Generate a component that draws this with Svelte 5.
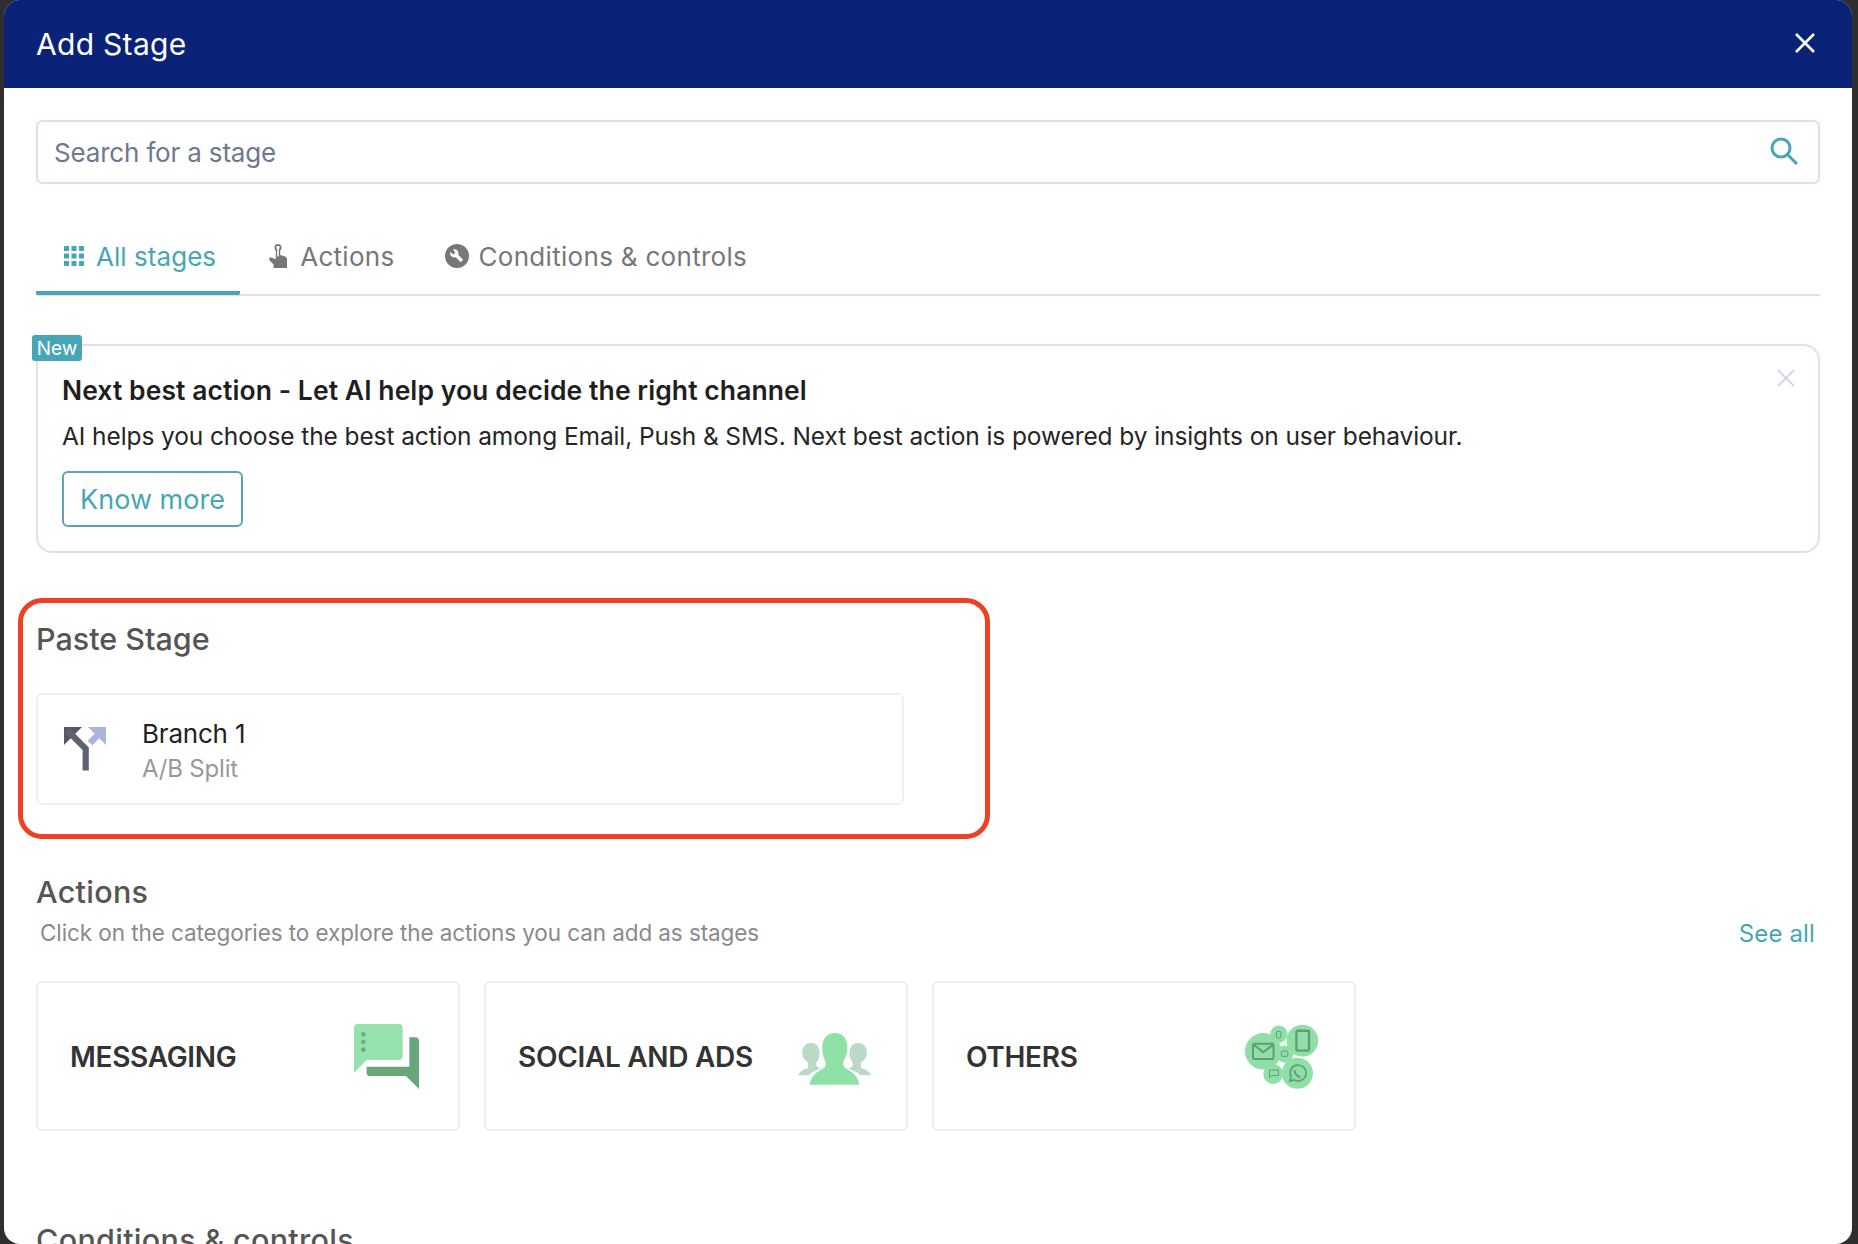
<script>
  const gridDots = [0, 7.5, 15].flatMap((y) => [0, 7.5, 15].map((x) => ({ x, y })));
</script>

<div class="modal">
  <header class="head">
    <h1>Add Stage</h1>
    <svg class="close" viewBox="0 0 20 20" aria-hidden="true"><path d="M1 1 19 19M19 1 1 19" /></svg>
  </header>

  <main class="body">
    <div class="search">
      <span>Search for a stage</span>
      <svg viewBox="0 0 28 28" aria-hidden="true"><circle cx="11" cy="11" r="9" /><path d="M17.5 17.5 27 27" /></svg>
    </div>

    <nav class="tabs">
      <div class="tab active">
        <svg class="ic grid" viewBox="0 0 20 20" aria-hidden="true">
          {#each gridDots as d}<rect x={d.x} y={d.y} width="5" height="5" />{/each}
        </svg>
        All stages
      </div>
      <div class="tab second">
        <svg class="ic hand" viewBox="0 0 18 24" aria-hidden="true">
          <path d="M5.500 3.500a3.500 3.500 0 0 1 7 0c0 1.300-.5 2.300-1.300 3V11l4.300 1.300c1.500.5 2.500 1.500 2.500 3V24H4.500v-3.500L.6 16.200c-1.200-1.400-.2-3 1.600-2.700l4.600 1.700V6.500c-.8-.7-1.300-1.700-1.300-3Z" />
          <circle cx="9" cy="3.500" r="1.700" fill="#fff" />
          <path d="M8.200 4.500h1.600v8H8.200z" fill="#fff" />
        </svg>
        Actions
      </div>
      <div class="tab third">
        <svg class="ic tool" viewBox="0 0 24 24" aria-hidden="true">
          <circle cx="12" cy="12" r="12" />
          <path d="M8 5.500a4 4 0 0 1 5.200 5.200l5 5-2.500 2.500-5-5A4 4 0 0 1 5.500 8l2.800 2.500 2-2z" fill="#fff" />
        </svg>
        Conditions &amp; controls
      </div>
    </nav>

    <section class="promo">
      <span class="badge">New</span>
      <svg class="promo-x" viewBox="0 0 18 18" aria-hidden="true"><path d="M1 1 17 17M17 1 1 17" /></svg>
      <h3>Next best action - Let AI help you decide the right channel</h3>
      <p>AI helps you choose the best action among Email, Push &amp; SMS. Next best action is powered by insights on user behaviour.</p>
      <button type="button">Know more</button>
    </section>

    <section class="paste">
      <h2 class="paste-title">Paste Stage</h2>
      <div class="stage">
        <svg viewBox="0 0 42 44" aria-hidden="true">
          <path d="M0 0H18L0 18Z" fill="#565965" />
          <path d="M4 4 21.700 21.700V43.500" fill="none" stroke="#5d6172" stroke-width="6.200" />
          <path d="M42 0H24L42 18Z" fill="#a9b6da" />
          <path d="M38 4 26 16" fill="none" stroke="#a9b6da" stroke-width="6.500" />
        </svg>
        <div class="stage-text">
          <div class="name">Branch 1</div>
          <div class="kind">A/B Split</div>
        </div>
      </div>
    </section>

    <h2 class="sec">Actions</h2>
    <div class="subrow">
      <span class="sub">Click on the categories to explore the actions you can add as stages</span>
      <span class="see">See all</span>
    </div>

    <div class="cats">
      <div class="cat">
        <span>MESSAGING</span>
        <svg class="msg" viewBox="72 40 195 195" aria-hidden="true">
          <path d="M84 40H206a12 12 0 0 1 12 12V136a12 12 0 0 1-12 12H110L72 186V52a12 12 0 0 1 12-12Z" fill="#96e2ae" />
          <circle cx="100" cy="71" r="7" fill="#6fab85" /><circle cx="100" cy="94" r="7" fill="#6fab85" /><circle cx="100" cy="117" r="7" fill="#6fab85" />
          <path d="M238 80H255a12 12 0 0 1 12 12V235L228 196H120a10 10 0 0 1-10-10V168H238Z" fill="#68a67c" />
        </svg>
      </div>
      <div class="cat">
        <span>SOCIAL AND ADS</span>
        <svg class="soc" viewBox="55 70 217 155" aria-hidden="true">
          <g fill="#bad9c6">
            <path d="M93 100c18 0 26 14 26 30 0 12-4 22-10 28v8c2 5 8 8 14 10l-10 4c-14 5-22 10-26 16H55c4-12 16-18 30-22v-16c-8-6-18-14-18-28 0-16 8-30 26-30Z" />
            <path d="M234 100c-18 0-26 14-26 30 0 12 4 22 10 28v8c-2 5-8 8-14 10l10 4c14 5 22 10 26 16h32c-4-12-16-18-30-22v-16c8-6 18-14 18-28 0-16-8-30-26-30Z" />
          </g>
          <path d="M165 70c26 0 37 20 37 44 0 14-4 26-9 34-4 8-5 20 2 26 18 10 40 22 42 50H90c2-28 24-40 42-50 7-6 6-18 2-26-5-8-7-20-7-34 0-24 12-44 38-44Z" fill="#fff" stroke="#fff" stroke-width="8" />
          <path d="M165 70c26 0 37 20 37 44 0 14-4 26-9 34-4 8-5 20 2 26 18 10 40 22 42 50H90c2-28 24-40 42-50 7-6 6-18 2-26-5-8-7-20-7-34 0-24 12-44 38-44Z" fill="#90e1a8" />
        </svg>
      </div>
      <div class="cat">
        <span>OTHERS</span>
        <svg class="oth" viewBox="45 40 220 195" aria-hidden="true">
          <g fill="#90dfa8">
            <circle cx="100" cy="122" r="55" /><circle cx="147" cy="70" r="26" /><circle cx="218" cy="90" r="48" />
            <circle cx="165" cy="130" r="26" /><circle cx="130" cy="190" r="30" /><circle cx="203" cy="188" r="47" />
          </g>
          <g fill="none" stroke="#5f9d78">
            <rect x="69" y="99" width="62" height="46" rx="4" stroke-width="6" />
            <path d="M71 102 100 125 129 102" stroke-width="6" />
            <rect x="200" y="60" width="38" height="60" rx="5" stroke-width="7" />
            <rect x="140" y="62" width="13" height="20" rx="2" stroke-width="3" />
            <rect x="155" y="121" width="19" height="16" rx="2" stroke-width="3" />
            <path d="M119 178h27v17h-20l-7 6Z" stroke-width="3" />
            <path d="M180 212l4-13a24 24 0 1 1 9 9Z" stroke-width="5" />
            <path d="M194 178c0 10 8 20 18 21" stroke-width="6" />
          </g>
        </svg>
      </div>
    </div>

    <h2 class="sec last">Conditions &amp; controls</h2>
  </main>
</div>

<style>
  :global(body) {
    margin: 0;
    background: #2e2e2e;
    overflow: hidden;
  }

  .modal {
    box-sizing: border-box;
    width: 1848px;
    height: 1244px;
    margin-left: 4px;
    background: #fff;
    border-radius: 16px;
    overflow: hidden;
    font-family: Inter, "Noto Sans", sans-serif;
    color: #222;
  }

  .head {
    height: 88px;
    background: #0a2378;
    display: flex;
    align-items: center;
    justify-content: space-between;
    padding: 0 37px 0 32px;
  }

  h1 {
    margin: 0;
    color: #fff;
    font-size: 30px;
    font-weight: 400;
    letter-spacing: 0.3px;
  }

  .close {
    width: 20px;
    height: 20px;
    margin-top: -2px;
    fill: none;
    stroke: #fff;
    stroke-width: 2.6;
  }

  .body {
    padding: 32px 32px 0;
  }

  .search {
    box-sizing: border-box;
    height: 64px;
    border: 2px solid #dcdfef;
    border-radius: 6px;
    display: flex;
    align-items: center;
    justify-content: space-between;
    padding: 1px 20px 0 16px;
    color: #6d7890;
    font-size: 26px;
    letter-spacing: -0.17px;
  }

  .search svg {
    width: 28px;
    height: 28px;
    margin-top: -3px;
    fill: none;
    stroke: #47a6b5;
    stroke-width: 3;
  }

  .tabs {
    box-sizing: border-box;
    height: 112px;
    border-bottom: 2px solid #dde0f0;
    display: flex;
    align-items: flex-end;
  }

  .tab {
    height: 72px;
    padding: 0 24px 2px 28px;
    margin-bottom: -1px;
    box-sizing: border-box;
    display: flex;
    align-items: center;
    gap: 13px;
    color: #777;
    font-size: 26px;
    letter-spacing: 0.3px;
    border-bottom: 4px solid transparent;
  }

  .tab.active {
    gap: 12px;
    color: #47a6b5;
    letter-spacing: 0.05px;
    border-bottom-color: #47a6b5;
    border-radius: 0 0 2px 2px;
  }

  .tab.second {
    padding-left: 29px;
  }

  .tab.third {
    padding-left: 26px;
    gap: 10px;
  }

  .ic {
    flex: none;
    fill: #777;
  }

  .grid {
    width: 20px;
    height: 20px;
    fill: #47a6b5;
  }

  .hand {
    width: 18px;
    height: 24px;
  }

  .tool {
    width: 24px;
    height: 24px;
  }

  .promo {
    position: relative;
    box-sizing: border-box;
    height: 209px;
    margin-top: 48px;
    border: 2px solid #dde0f0;
    border-radius: 16px;
    padding: 28px 24px 0;
  }

  .badge {
    position: absolute;
    left: -6px;
    top: -11px;
    width: 50px;
    height: 26px;
    border-radius: 3px;
    background: #47a6b5;
    color: #fff;
    font-size: 19px;
    line-height: 27px;
    text-align: center;
  }

  .promo-x {
    position: absolute;
    right: 23px;
    top: 23px;
    width: 18px;
    height: 18px;
    fill: none;
    stroke: #d4d7e2;
    stroke-width: 2;
  }

  h3 {
    margin: 0;
    font-size: 26.5px;
    line-height: 32px;
    font-weight: 600;
    color: #1f1f1f;
    letter-spacing: 0.07px;
  }

  p {
    margin: 14px 0 0;
    font-size: 24.5px;
    line-height: 32px;
    color: #262626;
    letter-spacing: -0.1px;
  }

  button {
    display: block;
    box-sizing: border-box;
    width: 181px;
    height: 56px;
    margin-top: 19px;
    background: #fff;
    border: 2px solid #5fa2b2;
    border-radius: 6px;
    color: #47a6b5;
    font: 400 27px Inter, sans-serif;
    padding: 1px 0 0;
  }

  .paste {
    box-sizing: border-box;
    width: 972px;
    height: 241px;
    margin: 45px 0 0 -18px;
    border: 5px solid #ef4026;
    border-radius: 24px;
    padding: 18px 0 0 13px;
  }

  h2 {
    margin: 0;
    font-size: 30.5px;
    line-height: 36px;
    font-weight: 500;
    color: #555;
    letter-spacing: 0.3px;
  }

  .paste-title {
    letter-spacing: 0;
  }

  .stage {
    box-sizing: border-box;
    width: 868px;
    height: 112px;
    margin-top: 36px;
    border: 2px solid #eef0f6;
    border-radius: 6px;
    display: flex;
    align-items: center;
    padding-left: 26px;
    gap: 36px;
  }

  .stage svg {
    width: 42px;
    height: 44px;
    flex: none;
  }

  .stage-text {
    padding-top: 5px;
  }

  .name {
    font-size: 26px;
    line-height: 34px;
    color: #222;
    letter-spacing: -0.2px;
  }

  .kind {
    font-size: 24px;
    line-height: 35px;
    color: #999;
    letter-spacing: -0.2px;
  }

  .sec {
    margin-top: 35px;
  }

  .subrow {
    display: flex;
    justify-content: space-between;
    height: 30px;
    margin-top: 8px;
    padding: 0 5px 0 4px;
    line-height: 30px;
  }

  .sub {
    font-size: 22.5px;
    color: #8a8a8a;
    letter-spacing: -0.09px;
  }

  .see {
    font-size: 24px;
    color: #47a6b5;
    letter-spacing: 0.15px;
    padding-top: 1px;
  }

  .cats {
    display: flex;
    gap: 24px;
    margin-top: 33px;
  }

  .cat {
    box-sizing: border-box;
    width: 424px;
    height: 150px;
    border: 2px solid #eef0f6;
    border-radius: 6px;
    display: flex;
    align-items: center;
    justify-content: space-between;
    padding-left: 32px;
    font-size: 28px;
    font-weight: 600;
    color: #333;
    letter-spacing: -0.3px;
  }

  .cat span {
    padding-top: 1px;
  }

  .msg {
    width: 65px;
    height: 65px;
    margin-right: 39px;
  }

  .soc {
    width: 73px;
    height: 52px;
    margin-right: 35px;
    margin-top: 6px;
  }

  .oth {
    width: 73px;
    height: 65px;
    margin-right: 36px;
  }

  .last {
    margin-top: 91px;
  }
</style>
